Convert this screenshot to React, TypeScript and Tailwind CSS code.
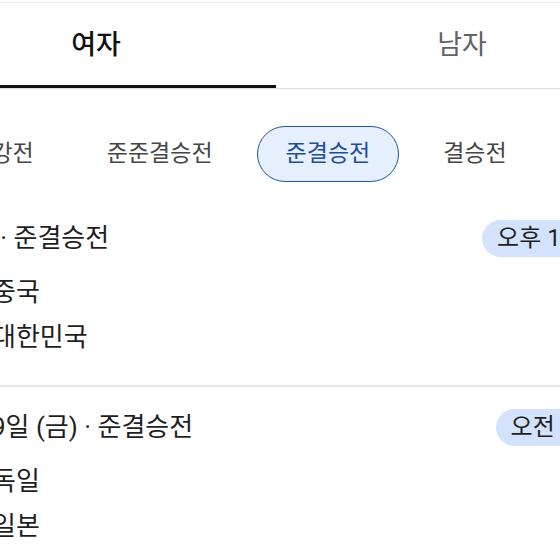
import React from "react";

const font = { fontFamily: 'Roboto, "Noto Sans CJK KR", sans-serif' };

function Flag({ c1, c2 }: { c1: string; c2: string }) {
  return (
    <div className="w-[32px] h-[22px] rounded-[3px] overflow-hidden flex flex-col border border-[#ddd]">
      <div className="flex-1" style={{ background: c1 }} />
      <div className="flex-1" style={{ background: c2 }} />
    </div>
  );
}

function Match({
  title,
  time,
  teams,
}: {
  title: string;
  time: string;
  teams: { name: string; c1: string; c2: string }[];
}) {
  return (
    <div className="pl-[34px] pr-[22px]">
      <div className="h-[38px] flex items-center justify-between">
        <div className="text-[26px] text-[#1f1f1f] leading-none whitespace-nowrap">{title}</div>
        <div className="h-[37px] px-[15px] rounded-full bg-[#d3e3fd] flex items-center text-[24px] text-[#1f1f1f] whitespace-nowrap">
          {time}
        </div>
      </div>
      <div className="mt-[12px] flex flex-col">
        {teams.map((t) => (
          <div key={t.name} className="h-[45px] flex items-center gap-[14px]">
            <Flag c1={t.c1} c2={t.c2} />
            <div className="text-[26px] text-[#1f1f1f] leading-none">{t.name}</div>
          </div>
        ))}
      </div>
    </div>
  );
}

export default function App() {
  const chips = ["8강전", "준준결승전", "준결승전", "결승전"];
  return (
    <div className="w-[560px] h-[560px] overflow-hidden bg-white" style={font}>
      <div className="w-[732px] -ml-[88px]">
        <div className="h-[2px]" />
        <div className="h-[1px] bg-[#ececec]" />
        <div className="flex border-b border-[#dadada]">
          <div className="ml-[4px] w-[362px] h-[85px] flex flex-col">
            <div className="flex-1 pt-[3px] flex items-center justify-center text-[27px] text-[#111] font-medium">여자</div>
            <div className="h-[3px] bg-[#111]" />
          </div>
          <div className="w-[370px] h-[85px] flex flex-col">
            <div className="flex-1 pt-[3px] pl-[4px] flex items-center justify-center text-[27px] text-[#5f6368]">남자</div>
            <div className="h-[3px]" />
          </div>
        </div>
        <div className="pt-[37px] pb-[16px] flex gap-[16px] pl-[38px]">
          {chips.map((c) => {
            const active = c === "준결승전";
            return (
              <div
                key={c}
                className={
                  active
                    ? "h-[56px] px-[27.5px] rounded-full border-[1.5px] border-[#1f55a3] bg-[#e6effc] text-[#1b4e9b] flex items-center text-[23px] whitespace-nowrap"
                    : "h-[56px] px-[27.5px] rounded-full border-[1.5px] border-transparent text-[#444746] flex items-center text-[23px] whitespace-nowrap"
                }
              >
                {c}
              </div>
            );
          })}
        </div>
        <div className="pt-[21px] pb-[26px]">
          <Match
            title="오늘 · 준결승전"
            time="오후 10:00"
            teams={[
              { name: "중국", c1: "#de2910", c2: "#de2910" },
              { name: "대한민국", c1: "#ffffff", c2: "#ffffff" },
            ]}
          />
        </div>
        <div className="h-[2px] bg-[#e8e8e8]" />
        <div className="pt-[21px]">
          <Match
            title="8월 9일 (금) · 준결승전"
            time="오전 3:30"
            teams={[
              { name: "독일", c1: "#000000", c2: "#dd0000" },
              { name: "일본", c1: "#ffffff", c2: "#ffffff" },
            ]}
          />
        </div>
      </div>
    </div>
  );
}
